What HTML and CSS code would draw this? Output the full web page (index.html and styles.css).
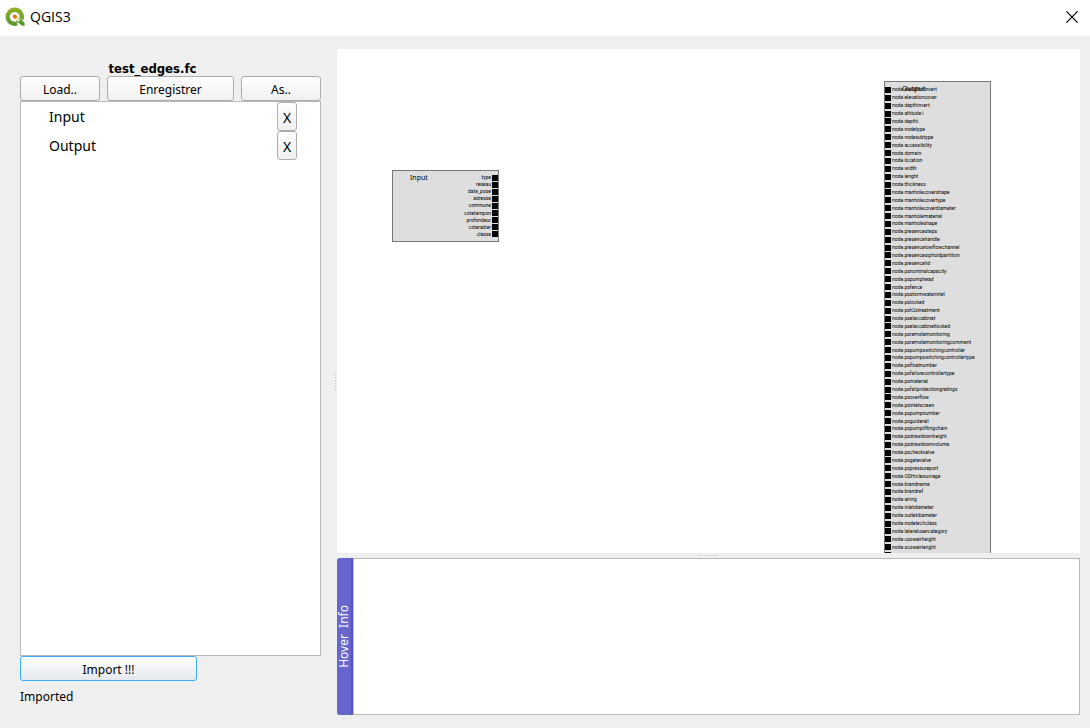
FILE: index.html
```html
<!DOCTYPE html>
<html lang="fr">
<head>
<meta charset="utf-8">
<title>QGIS3</title>
<link rel="stylesheet" href="styles.css">
</head>
<body>
<header class="titlebar">
  <svg class="logo" viewBox="0 0 20 20" aria-hidden="true">
    <defs><linearGradient id="ring" x1="0" y1="0" x2="0" y2="1"><stop offset="0" stop-color="#93b023"/><stop offset="1" stop-color="#589632"/></linearGradient></defs>
    <path d="M9.8 0.4A9.3 9.3 0 1 0 12.6 18.6L12 14.2A4.9 4.9 0 1 1 14.6 10.6L18.2 13.4A9.3 9.3 0 0 0 9.8 0.4Z" fill="url(#ring)"/>
    <path d="M12.4 12.2L14.4 10.6L19.6 16V18.8H17.2L11.4 14.2Z" fill="#589632"/>
    <path d="M10.6 10.6L12 9.6L15.4 13L13.6 14.8L10.2 12Z" fill="#f0e3a0"/>
    <path d="M7.8 7.8H11L12.4 9.6L10.2 12L7.8 10.6Z" fill="#ee7913"/>
  </svg>
  <h1 class="title">QGIS3</h1>
  <button class="close" aria-label="Fermer"><svg class="close-icon" viewBox="0 0 12 12" aria-hidden="true"><path d="M0.3 0.3L11.7 11.7M11.7 0.3L0.3 11.7" stroke="#000" stroke-width="1.2"/></svg></button>
</header>
<main class="workspace">
  <section class="side">
    <h2 class="filename">test_edges.fc</h2>
    <div class="toolbar">
      <button class="btn">Load..</button>
      <button class="btn">Enregistrer</button>
      <button class="btn">As..</button>
    </div>
    <ul class="list">
      <li class="item"><span>Input</span><button class="btn remove">X</button></li>
      <li class="item"><span>Output</span><button class="btn remove">X</button></li>
    </ul>
    <button class="btn import">Import !!!</button>
    <p class="status">Imported</p>
  </section>
  <div class="grip grip-v"></div>
  <section class="views">
    <div class="scene">
      <div class="node node-input">
        <span class="node-title">Input</span>
        <ul class="ports ports-out">
          <li>type</li><li>reseau</li><li>date_pose</li><li>adresse</li><li>commune</li><li>cotetampon</li><li>profondeur</li><li>coteradier</li><li>classe</li>
        </ul>
      </div>
      <div class="node node-output">
        <span class="node-title">Output</span>
        <ul class="ports ports-in">
          <li>node.elevationinvert</li><li>node.elevationcover</li><li>node.depthinvert</li><li>node.altitude.i</li><li>node.depthi.</li><li>node.nodetype</li><li>node.nodesubtype</li><li>node.accessibility</li><li>node.domain</li><li>node.location</li>
          <li>node.width</li><li>node.lenght</li><li>node.thickness</li><li>node.manholecovershape</li><li>node.manholecovertype</li><li>node.manholecoverdiameter</li><li>node.manholematerial</li><li>node.manholeshape</li><li>node.presencesteps</li><li>node.presencehandle</li>
          <li>node.presencelowflowchannel</li><li>node.presencesiphoidpartition</li><li>node.presencelid</li><li>node.psnominalcapacity</li><li>node.pspumphead</li><li>node.psfence</li><li>node.psstormwaterinlet</li><li>node.pslocked</li><li>node.psh2streatment</li><li>node.pseleccabinet</li>
          <li>node.pseleccabinetlocked</li><li>node.psremotemonitoring</li><li>node.psremotemonitoringcomment</li><li>node.pspumpswitchingcontroller</li><li>node.pspumpswitchingcontrollertype</li><li>node.psfloatnumber</li><li>node.psfailurecontrollertype</li><li>node.psmaterial</li><li>node.psfallprotectiongratings</li><li>node.psoverflow</li>
          <li>node.psinletscreen</li><li>node.pspumpnumber</li><li>node.psguiderail</li><li>node.pspumpliftingchain</li><li>node.psdrawdownheight</li><li>node.psdrawdownvolume</li><li>node.pscheckvalve</li><li>node.psgatevalve</li><li>node.pspressureport</li><li>node.OSHrcleouvrage</li>
          <li>node.brandname</li><li>node.brandref</li><li>node.airing</li><li>node.inletdiameter</li><li>node.outletdiameter</li><li>node.nodetechclass</li><li>node.lateralusercategory</li><li>node.csoweirheight</li><li>node.scoweirlenght</li><li>node.scoweirwidth</li>
        </ul>
      </div>
    </div>
    <div class="grip grip-h"></div>
    <div class="info">
      <div class="info-tab"><span>Hover&nbsp; Info</span></div>
      <div class="info-body"></div>
    </div>
  </section>
</main>
</body>
</html>
```
FILE: styles.css
```css
* { box-sizing: border-box; }
body {
  margin: 0;
  height: 100vh;
  display: flex;
  flex-direction: column;
  background: #efefef;
  color: #000;
  font: 12px/16px "Noto Sans", sans-serif;
}
h1, h2, p, ul { margin: 0; padding: 0; }
ul { list-style: none; }
button { font: inherit; color: inherit; }

.titlebar {
  flex: none;
  display: flex;
  align-items: center;
  height: 36px;
  padding: 0 12px 2px 5px;
  background: #fff;
}
.logo { width: 20px; height: 20px; margin-right: 5px; }
.title { font: 14px/20px "Open Sans", sans-serif; flex: 1; }
.close { display: flex; padding: 0; border: 0; background: none; }
.close-icon { width: 12px; height: 12px; }

.workspace {
  flex: 1;
  min-height: 0;
  display: grid;
  grid-template-columns: 301px 16px 1fr;
  padding: 13px 10px 13px 20px;
}
.side { display: flex; flex-direction: column; min-height: 0; padding: 12px 0 10px; }
.filename { text-align: center; font: bold 13px/15px "DejaVu Sans Condensed", "DejaVu Sans", sans-serif; padding-right: 36px; }
.toolbar { display: grid; grid-template-columns: 80fr 127fr 80fr; gap: 7px; }
.btn {
  height: 25px;
  padding: 2px 0 0;
  border: 1px solid #adadad;
  border-radius: 3px;
  background: linear-gradient(#fefefe, #f0f0f0);
}
.list { flex: 1; border: 1px solid #b9b9b9; background: #fff; }
.item {
  display: flex;
  justify-content: space-between;
  align-items: center;
  height: 29px;
  padding: 0 23px 0 28px;
  font-size: 14px;
}
.remove { width: 20px; height: 29px; }
.import { width: 177px; border-color: #3daefd; background: linear-gradient(#fdfefe, #e5e9ee); }
.status { padding-top: 8px; }

.grip-v {
  align-self: center;
  justify-self: end;
  width: 2px;
  height: 16px;
  background: repeating-linear-gradient(#bbb 0 1px, #efefef 1px 3px) 0 0 / 1px 100% no-repeat;
}
.views { display: flex; flex-direction: column; min-width: 0; min-height: 0; }
.scene { position: relative; flex: 1; overflow: hidden; background: #fff; }
.grip-h {
  align-self: center;
  width: 16px;
  height: 5px;
  background: repeating-linear-gradient(90deg, #bbb 0 1px, #efefef 1px 3px) 0 2px / 100% 1px no-repeat;
}

.node { position: absolute; width: 107px; border: 1px solid #777; background: #dedede; }
.node-input { left: 55px; top: 121px; height: 72px; }
.node-output { left: 547px; top: 32px; }
.node-title { position: absolute; left: 17px; top: 2px; font-size: 7px; line-height: 9px; }
.ports { display: grid; grid-auto-rows: 1fr; font: 5px/7px Roboto, sans-serif; }
.ports li { display: flex; align-items: center; gap: 1px; white-space: nowrap; }
.ports li::before { content: ""; width: 6px; height: 6px; background: #000; }
.ports-in { height: 473px; margin-top: 4px; }
.ports-out { height: 64px; margin-top: 3px; }
.ports-out li { flex-direction: row-reverse; }

.info { flex: none; display: flex; height: 157px; }
.info-tab {
  width: 16px;
  display: flex;
  align-items: center;
  justify-content: center;
  border-right: 2px solid #5a54bd;
  border-radius: 3px 0 0 3px;
  background: #6666cc;
  color: #fff;
}
.info-tab span { writing-mode: vertical-rl; transform: rotate(180deg); }
.info-body { flex: 1; border: 1px solid #b9b9b9; background: #fff; }
```
